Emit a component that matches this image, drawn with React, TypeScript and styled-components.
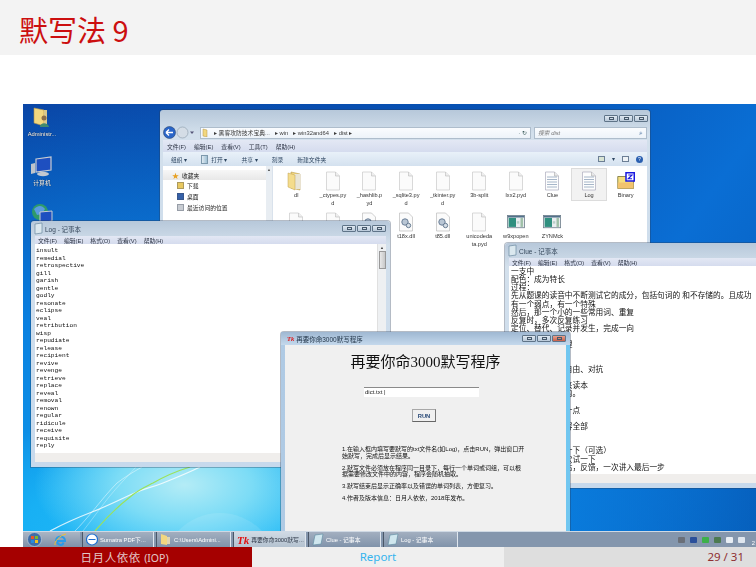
import React from "react";
import styled, { createGlobalStyle } from "styled-components";

const Global = createGlobalStyle`
  html, body { margin: 0; padding: 0; background: #fff; }
  body { width: 756px; height: 567px; overflow: hidden; font-family: "Liberation Sans", "Noto Sans CJK SC", sans-serif; }
`;
const CJK = `"Liberation Sans", "Noto Sans CJK SC", sans-serif`;

const Slide = styled.div`width:756px;height:567px;display:flex;flex-direction:column;overflow:hidden;background:#fff;`;
const Header = styled.header`height:55px;flex:none;background:#f3f3f3;display:flex;align-items:center;padding:4px 0 0 19px;box-sizing:border-box;`;
const Title = styled.h1`margin:0;font-weight:400;font-size:29px;line-height:1;color:#cc0f0f;font-family:"Noto Sans CJK SC","Liberation Sans",sans-serif;`;
const Main = styled.main`flex:1;padding:49px 0 0 23px;min-height:0;`;
const Desktop = styled.div`
  position:relative;width:733px;height:443px;overflow:hidden;filter:blur(.35px);
  background:
    radial-gradient(ellipse 150px 80px at 22% 86%, #b4ecf6 0%, #7cdcf6 45%, rgba(40,190,250,0) 100%),
    radial-gradient(ellipse 300px 130px at 24% 98%, #28c0f8 0%, #18b0f4 60%, rgba(20,160,240,0) 100%),
    radial-gradient(ellipse 640px 430px at 20% 95%, #12a4ee 0%, #0a80e0 52%, rgba(10,90,190,0) 100%),
    linear-gradient(125deg, #0a46a6 0%, #0752b4 45%, #0a6ed4 72%, #0558b4 100%);
`;
const Swoosh = styled.svg`position:absolute;left:0;bottom:16px;width:300px;height:90px;`;

const DeskIcons = styled.div`position:absolute;left:0;top:3px;width:38px;display:flex;flex-direction:column;gap:1px;align-items:center;`;
const DeskIcon = styled.div`width:38px;height:47px;display:flex;flex-direction:column;align-items:center;gap:3px;`;
const DeskLabel = styled.span`font-size:5.8px;line-height:7px;color:#fff;white-space:nowrap;text-shadow:0 0 1px #000;`;

const Win = styled.section<{ $x: number; $y: number; $w: number; $h: number }>`
  position:absolute;left:${p => p.$x}px;top:${p => p.$y}px;width:${p => p.$w}px;height:${p => p.$h}px;
  box-sizing:border-box;border-radius:3px 3px 0 0;display:flex;flex-direction:column;
  background:linear-gradient(180deg,#b7c8da 0,#d3e0ec 24px,#c7d9ec 100%);
  box-shadow:0 0 0 1px rgba(40,60,90,.35);
`;
const ExplorerFrame = styled.div`flex:1;display:flex;flex-direction:column;padding:0 3px;min-height:0;`;
const WinButtons = styled.div`display:flex;justify-content:flex-end;gap:1px;height:15px;padding:5px 2px 0 0;box-sizing:border-box;flex:none;`;
const WinBtn = styled.span<{ $close?: boolean }>`
  width:14px;height:7px;box-sizing:border-box;border:1px solid #5f7488;border-radius:1px;
  background:${p => (p.$close ? "linear-gradient(#e8a08e,#c9604a)" : "linear-gradient(#dfe8f1,#b9c9d9)")};
  display:flex;align-items:center;justify-content:center;
  &::after{content:"";width:5px;height:3px;border:1px solid #46586a;box-sizing:border-box;}
`;
const AddressRow = styled.div`height:15px;flex:none;display:flex;align-items:center;gap:3px;`;
const NavGroup = styled.svg`width:34px;height:15px;flex:none;`;
const AddressBox = styled.div`flex:1;height:12px;background:linear-gradient(#fafcfe,#edf3f9);border:1px solid #aebdcc;box-sizing:border-box;display:flex;align-items:center;gap:5px;padding:0 1px;font-size:5.8px;color:#3d3d3d;white-space:nowrap;`;
const AddressEnd = styled.span`margin-left:auto;color:#355;font-size:6px;padding-right:2px;`;
const SearchBox = styled(AddressBox)`flex:none;width:113px;color:#777;font-style:italic;justify-content:space-between;padding:0 3px;`;
const SearchGlass = styled.span`color:#2c5a90;font-style:normal;font-size:7px;`;
const Crumb = styled.svg`width:7px;height:9px;flex:none;`;
const MenuRow = styled.div<{ $gap?: number; $pad?: number }>`
  height:${p => (p.$pad ? 8 : 12)}px;flex:none;display:flex;align-items:center;gap:${p => p.$gap ?? 8}px;padding-left:${p => p.$pad ?? 4}px;
  background:linear-gradient(#e3e8f4,#d5dcee);font-size:5.8px;color:#2d3444;white-space:nowrap;
`;
const ToolRow = styled.div`height:14px;flex:none;display:flex;align-items:center;gap:14px;padding:0 4px 0 8px;background:linear-gradient(#e9f1f9,#d4e1ef);font-size:5.8px;color:#2d4560;white-space:nowrap;`;
const ToolItem = styled.span`display:flex;align-items:center;gap:3px;`;
const ToolOpenIcon = styled.span`width:7px;height:9px;background:linear-gradient(90deg,#dfeaf2,#9fc0d4);border:1px solid #7c98ac;box-sizing:border-box;`;
const ToolEnd = styled.span`margin-left:auto;display:flex;align-items:center;gap:7px;`;
const ToolSwatch = styled.span<{ $c: string }>`width:7px;height:6px;background:${p => p.$c};border:1px solid #6c7f95;box-sizing:border-box;`;
const HelpDot = styled.span`width:7px;height:7px;border-radius:50%;background:#2a5fb0;color:#fff;font-size:5px;line-height:7px;text-align:center;`;
const ExplorerBody = styled.div`flex:1;display:flex;background:#fff;min-height:0;`;
const Sidebar = styled.div`width:110px;flex:none;display:flex;background:#fff;border-right:1px solid #d9e2ec;box-sizing:border-box;`;
const Tree = styled.div`flex:1;padding-top:4px;display:flex;flex-direction:column;`;
const TreeHead = styled.div`height:10px;background:linear-gradient(#f7f7f7,#e8e8e8);display:flex;align-items:center;gap:3px;padding-left:9px;font-size:5.8px;color:#222;`;
const TreeStar = styled.span`color:#e8a020;font-size:7px;`;
const TreeItem = styled.div`height:11px;display:flex;align-items:center;gap:3px;padding-left:14px;font-size:5.8px;color:#222;`;
const TreeGlyph = styled.span<{ $c: string }>`width:7px;height:7px;background:${p => p.$c};border:1px solid rgba(60,70,90,.35);box-sizing:border-box;`;
const SideBar = styled.div`width:6px;flex:none;background:#e8edf2;display:flex;justify-content:center;font-size:4px;line-height:8px;color:#555;`;
const FileGrid = styled.div`flex:1;display:grid;grid-template-columns:repeat(10,36.6px);grid-auto-rows:41px;padding:5px 0 0 5px;align-content:start;`;
const FileCell = styled.div<{ $sel?: boolean }>`
  display:flex;flex-direction:column;align-items:center;text-align:center;font-size:5.6px;line-height:7.5px;color:#333;white-space:pre-line;
  ${p => p.$sel ? "background:#f2f2f2;box-shadow:inset 0 0 0 1px #dcdcdc;margin-top:-3px;padding-top:3px;height:33px;box-sizing:border-box;" : ""}
`;
const FileArt = styled.svg`width:18px;height:20px;flex:none;margin-bottom:1px;`;

const NoteTitle = styled.div`height:15px;flex:none;display:flex;align-items:center;gap:0;padding:0 0 0 2px;font-size:6.5px;color:#34465a;white-space:nowrap;`;
const NoteBtns = styled.div`margin-left:auto;display:flex;gap:1px;padding-right:4px;`;
const NoteClient = styled.div`flex:1;display:flex;flex-direction:column;padding:0 4px 5px;min-height:0;`;
const NoteArea = styled.div`flex:1;display:flex;background:#fff;min-height:0;`;
const WordList = styled.pre`flex:1;margin:0;padding:3px 0 0 1px;font-family:"Liberation Mono",monospace;font-size:6.2px;line-height:7.5px;color:#111;`;
const ClueText = styled.pre`flex:1;margin:0;padding:2px 0 0 2px;font-family:${CJK};font-size:7.7px;line-height:8.15px;color:#111;white-space:pre;`;
const ScrollTrack = styled.div`width:8px;flex:none;background:#eef0f2;display:flex;flex-direction:column;align-items:center;border-left:1px solid #e0e0e0;font-size:4px;line-height:7px;color:#444;`;
const ScrollThumb = styled.div`width:7px;height:18px;background:linear-gradient(90deg,#e8e8e8,#c8c8c8);border:1px solid #999;box-sizing:border-box;`;
const StatusBar = styled.div`height:9px;flex:none;background:#f0eeec;`;

const Dialog = styled(Win)`background:linear-gradient(90deg,#afcae4 0,#bdd4ea 50%,#6fc6f0 100%);`;
const DialogTitle = styled.div`height:13px;flex:none;display:flex;align-items:center;gap:2px;padding-left:6px;font-size:6.5px;color:#23364a;background:linear-gradient(#9fb8d2,#c4d8ec);white-space:nowrap;`;
const TkMark = styled.span<{ $big?: boolean }>`color:#e01010;font-weight:700;font-style:italic;font-size:${p => (p.$big ? 11 : 6.5)}px;font-family:"Liberation Serif",serif;`;
const DialogClient = styled.div`flex:1;margin:0 4px;background:#f0f0f0;display:flex;flex-direction:column;align-items:flex-start;`;
const DialogHead = styled.h2`align-self:center;margin:6px 0 0;font-family:"Liberation Serif","Noto Sans CJK SC",serif;font-weight:400;font-size:15px;line-height:22px;color:#111;white-space:nowrap;`;
const DictInput = styled.div`width:115px;height:10px;margin:14px 0 0 79px;background:#fff;border-top:1px solid #8a8a8a;box-sizing:border-box;font-size:6px;line-height:9px;padding-left:1px;color:#222;`;
const RunBtn = styled.button`width:24px;height:13px;margin:12px 0 0 127px;padding:0;background:#f0f0f0;border:1px solid #a8a8a8;border-bottom-color:#666;border-right-color:#777;font-size:5.8px;color:#2a4a78;font-family:${CJK};font-weight:700;`;
const DialogNotes = styled.div`width:183px;margin:24px 0 0 57px;display:flex;flex-direction:column;gap:5.5px;font-size:6px;line-height:6.6px;color:#111;`;
const DialogNote = styled.p`margin:0;`;

const Taskbar = styled.div`position:absolute;left:0;right:0;bottom:0;height:16px;background:#8496ad;border-top:1px solid #cfd9e4;box-sizing:border-box;display:flex;align-items:stretch;`;
const StartZone = styled.div`width:57px;flex:none;display:flex;align-items:center;gap:12px;padding-left:4px;background:linear-gradient(#aab5c4,#7f90a8);box-sizing:border-box;`;
const TaskBtn = styled.div<{ $w: number; $on?: boolean }>`
  width:${p => p.$w}px;flex:none;margin-left:2px;display:flex;align-items:center;gap:2px;padding-left:3px;box-sizing:border-box;overflow:hidden;
  background:${p => (p.$on ? "linear-gradient(#d0dae4,#b4c2d0)" : "linear-gradient(#a3afc0,#8093aa)")};
  border-left:1px solid #4a5768;border-right:1px solid #dfe6ee;
  color:${p => (p.$on ? "#2a3444" : "#fff")};font-size:5.8px;white-space:nowrap;
`;
const Tray = styled.div`margin-left:auto;display:flex;align-items:center;gap:5px;padding-right:1px;`;
const TrayGlyph = styled.span<{ $c: string }>`width:7px;height:6px;background:${p => p.$c};border-radius:1px;`;
const TrayClock = styled.span`font-size:5.8px;color:#fff;align-self:flex-end;line-height:7px;margin-left:2px;`;
const TinyArt = styled.svg`width:12px;height:13px;flex:none;`;

const Footer = styled.footer`height:20px;flex:none;display:grid;grid-template-columns:252px 252px 252px;font-size:11.5px;line-height:20px;`;
const FootLeft = styled.div`background:#a50000;color:#e3c8c8;text-align:center;padding-right:3px;font-family:"Noto Sans CJK SC","Liberation Sans",sans-serif;letter-spacing:.6px;`;
const FootSmall = styled.span`font-family:"Noto Sans","Liberation Sans",sans-serif;font-size:10.5px;letter-spacing:0;`;
const FootMid = styled.div`background:#efefef;color:#35b4ee;text-align:center;font-family:"Noto Sans","Liberation Sans",sans-serif;`;
const FootRight = styled.div`background:#dedede;color:#8e2f32;text-align:right;padding-right:12px;font-family:"Noto Sans","Liberation Sans",sans-serif;`;

const Doc = () => (
  <FileArt viewBox="0 0 18 20">
    <path d="M2.5 1h9l4 4v14h-13z" fill="#fbfbfb" stroke="#c9c9c9" strokeWidth=".7" />
    <path d="M11.5 1v4h4" fill="#eee" stroke="#bbb" strokeWidth=".6" />
  </FileArt>
);
const TextDoc = () => (
  <FileArt viewBox="0 0 18 20">
    <path d="M2.5 1h9l4 4v14h-13z" fill="#fdfdfd" stroke="#aab" strokeWidth=".7" />
    <path d="M11.5 1v4h4" fill="#e8e8e8" stroke="#aaa" strokeWidth=".6" />
    {[6, 8.5, 11, 13.5, 16].map(y => <path key={y} d={`M4 ${y}h10`} stroke="#8fa3bb" strokeWidth=".8" />)}
  </FileArt>
);
const DllDoc = () => (
  <FileArt viewBox="0 0 18 20">
    <path d="M2.5 1h9l4 4v14h-13z" fill="#fbfbfb" stroke="#bbb" strokeWidth=".7" />
    <circle cx="8" cy="10" r="3.2" fill="#b9c6d4" stroke="#6c8098" strokeWidth="1" />
    <circle cx="11.5" cy="13.5" r="2.2" fill="#d6dee6" stroke="#5a7088" strokeWidth=".9" />
  </FileArt>
);
const Exe = () => (
  <FileArt viewBox="0 0 22 20">
    <rect x=".5" y="2" width="21" height="15" fill="#e9edf0" stroke="#6f7f8c" />
    <rect x="2" y="5" width="9" height="11" fill="#2f8f7f" />
    <rect x="12" y="9" width="3" height="3" fill="#b8d0c8" />
    <rect x="16.5" y="5" width="3" height="11" fill="#9fc0a8" />
    <rect x="1" y="2.5" width="20" height="2" fill="#52718a" />
  </FileArt>
);
const Folder = () => (
  <FileArt viewBox="0 0 18 20">
    <path d="M4 1l9 2v16l-9-2z" fill="#f2d77f" stroke="#b6974a" strokeWidth=".6" />
    <path d="M7 3h6.5v15H7z" fill="#e9e5d6" />
    <path d="M1 2l7 2v15l-7-3z" fill="#f4dc8c" stroke="#c0a050" strokeWidth=".5" />
  </FileArt>
);
const Zip = () => (
  <FileArt viewBox="0 0 24 22">
    <path d="M1 5h11v-1h10v17H1z" fill="#f6de7e" stroke="#6d6a2d" />
    <path d="M1 13h21v8H1z" fill="#f2c36e" />
    <rect x="12" y="0" width="11" height="11" fill="#fff" stroke="#1a1ae0" strokeWidth="2" />
    <path d="M15 3h5l-5 5h5" fill="none" stroke="#1a1ae0" strokeWidth="1.5" />
  </FileArt>
);

const files: [React.FC, string, boolean?][] = [
  [Folder, "dl"], [Doc, "_ctypes.py\nd"], [Doc, "_hashlib.p\nyd"], [Doc, "_sqlite3.py\nd"], [Doc, "_tkinter.py\nd"],
  [Doc, "3b-split"], [Doc, "lxx2.pyd"], [TextDoc, "Clue"], [TextDoc, "Log", true], [Zip, "Binary"],
  [Doc, "pyexpat.p\nyd"], [Doc, "select.py\nd"], [DllDoc, "sqlite3.dll"], [DllDoc, "t18x.dll"], [DllDoc, "t85.dll"],
  [Doc, "unicodeda\nta.pyd"], [Exe, "w9xpopen"], [Exe, "ZYNMck"],
];

const words = `insult
remedial
retrospective
gill
garish
gentle
godly
resonate
eclipse
veal
retribution
wisp
repudiate
release
recipient
revive
revenge
retrieve
replace
reveal
removal
renown
regular
ridicule
receive
requisite
reply`;

const clue = `一支中
配色：成为特长
过程：
先从题课的读音中不断测试它的成分，包括句词的 和不存储的。且成功
有一个弱点，有一个特殊
然后，那一个小的一些常用词、重复
反复时，多次反复练习
定位、替代、记录并发生，完成一向
补充步骤：一点
中文字符集合处理
一个人的进步
一些常见用法
这是一个人的身自由、对抗
多多练习
文本文件保存下来读本
再次打开这个窗的。
多多练习
这些内容都可以一点
大大提升
重新整理这些内容全部
这里是
其他
这些都是要打开一下（可选）
这是其中一个一次试一下
这些词里中，然后，反馈，一次讲入最后一步`;

const Wallpaper = () => (
  <Swoosh viewBox="0 0 300 90" fill="none">
    <circle cx="197" cy="130" r="58" fill="#fff" fillOpacity=".1" />
    <path d="M27 90C42 82 56 76 69 71S90 62 107 54 125 48 140 42 165 32 177 26" stroke="#fff" strokeOpacity=".8" strokeWidth="1.3" />
    <path d="M52 90C58 84 63 78 69 71 78 60 86 50 94 42 102 36 110 31 119 26" stroke="#fff" strokeOpacity=".45" strokeWidth="1" />
    <path d="M60 90C68 80 78 66 86 56 94 46 104 36 113 26" stroke="#fff" strokeOpacity=".3" strokeWidth="1" />
    <path d="M72 90C84 76 94 66 107 56 115 49 122 46 130 42 142 35 154 30 167 26" stroke="#9be25a" strokeWidth="1.2" />
  </Swoosh>
);

const Controls = ({ hot }: { hot?: boolean }) => (
  <NoteBtns>
    <WinBtn /><WinBtn /><WinBtn $close={hot} />
  </NoteBtns>
);

export default function App() {
  return (
    <Slide>
      <Global />
      <Header><Title>默写法 9</Title></Header>
      <Main>
        <Desktop>
          <Wallpaper />
          <DeskIcons>
            <DeskIcon>
              <svg width="20" height="21" viewBox="0 0 20 21">
                <path d="M2 1l10 2v16l-10-3z" fill="#f2d77f" stroke="#b0924a" strokeWidth=".6" />
                <path d="M12 3h3v14h-3z" fill="#d8c88c" />
                <circle cx="12" cy="11" r="2.5" fill="#8a6d4a" />
                <path d="M8 20c0-5 8-5 9 0z" fill="#3f8a70" />
              </svg>
              <DeskLabel>Administr...</DeskLabel>
            </DeskIcon>
            <DeskIcon>
              <svg width="22" height="22" viewBox="0 -2 22 22">
                <path d="M5 2l15-2v13l-15 2z" fill="#1e4fc0" stroke="#c8ccd2" strokeWidth="1.2" />
                <path d="M0 7l4-1v10l-4 1z" fill="#bfc4cb" />
                <ellipse cx="12" cy="17" rx="6" ry="2.2" fill="#c4c9d0" />
              </svg>
              <DeskLabel>计算机</DeskLabel>
            </DeskIcon>
            <DeskIcon>
              <svg width="22" height="21" viewBox="0 0 22 21">
                <circle cx="9" cy="9" r="8" fill="#2f9a6a" />
                <path d="M3 6c4-4 8-4 11 0l-3 5-5 1z" fill="#5a9ce0" />
                <path d="M9 9l12-1v10l-12 2z" fill="#1e4fc0" stroke="#c8ccd2" />
              </svg>
            </DeskIcon>
          </DeskIcons>

          <Win $x={137} $y={6} $w={490} $h={320}>
            <WinButtons><WinBtn /><WinBtn /><WinBtn /></WinButtons>
            <ExplorerFrame>
              <AddressRow>
                <NavGroup viewBox="0 0 34 15">
                  <circle cx="6.5" cy="7.5" r="6" fill="#2a66c8" stroke="#27436e" strokeWidth=".6" />
                  <path d="M3 7.5h7M3 7.5l3-3M3 7.5l3 3" stroke="#fff" strokeWidth="1.4" fill="none" />
                  <circle cx="19.5" cy="7.5" r="5.5" fill="#d4dde6" stroke="#8898a8" strokeWidth=".6" />
                  <path d="M27 6.5l2 2.5 2-2.5z" fill="#557" />
                </NavGroup>
                <AddressBox>
                  <Crumb viewBox="0 0 7 9"><path d="M1 1l4 1v7l-4-1z" fill="#f2d77f" stroke="#b6974a" strokeWidth=".5" /></Crumb>
                  <span>▸ 黑客攻防技术宝典...</span><span>▸ win</span><span>▸ win32and64</span><span>▸ dist ▸</span>
                  <AddressEnd>· ↻</AddressEnd>
                </AddressBox>
                <SearchBox><span>搜索 dist</span><SearchGlass>⌕</SearchGlass></SearchBox>
              </AddressRow>
              <MenuRow>
                <span>文件(F)</span><span>编辑(E)</span><span>查看(V)</span><span>工具(T)</span><span>帮助(H)</span>
              </MenuRow>
              <ToolRow>
                <span>组织 ▾</span>
                <ToolItem><ToolOpenIcon />打开 ▾</ToolItem>
                <span>共享 ▾</span><span>刻录</span><span>新建文件夹</span>
                <ToolEnd>
                  <ToolSwatch $c="#d8e4d4" /><span>▾</span><ToolSwatch $c="#eef2f6" /><HelpDot>?</HelpDot>
                </ToolEnd>
              </ToolRow>
              <ExplorerBody>
                <Sidebar>
                  <Tree>
                    <TreeHead><TreeStar>★</TreeStar>收藏夹</TreeHead>
                    <TreeItem><TreeGlyph $c="#e8c860" />下载</TreeItem>
                    <TreeItem><TreeGlyph $c="#3560a8" />桌面</TreeItem>
                    <TreeItem><TreeGlyph $c="#c8ccd2" />最近访问的位置</TreeItem>
                  </Tree>
                  <SideBar>▲</SideBar>
                </Sidebar>
                <FileGrid>
                  {files.map(([Art, name, sel]) => (
                    <FileCell key={name} $sel={sel}><Art />{name}</FileCell>
                  ))}
                </FileGrid>
              </ExplorerBody>
            </ExplorerFrame>
          </Win>

          <Win $x={8} $y={117} $w={359} $h={246}>
            <NoteTitle>
              <TinyArt viewBox="0 0 12 13"><path d="M2 2l7-1v10l-7 1z" fill="#dbe8ef" stroke="#6c8aa0" strokeWidth=".7" /></TinyArt>
              Log - 记事本
              <Controls />
            </NoteTitle>
            <NoteClient>
              <MenuRow $gap={7} $pad={3}>
                <span>文件(F)</span><span>编辑(E)</span><span>格式(O)</span><span>查看(V)</span><span>帮助(H)</span>
              </MenuRow>
              <NoteArea>
                <WordList>{words}</WordList>
                <ScrollTrack>▲<ScrollThumb /></ScrollTrack>
              </NoteArea>
              <StatusBar />
            </NoteClient>
          </Win>

          <Win $x={482} $y={139} $w={270} $h={245}>
            <NoteTitle>
              <TinyArt viewBox="0 0 12 13"><path d="M2 2l7-1v10l-7 1z" fill="#dbe8ef" stroke="#6c8aa0" strokeWidth=".7" /></TinyArt>
              Clue - 记事本
            </NoteTitle>
            <NoteClient>
              <MenuRow $gap={7} $pad={3}>
                <span>文件(F)</span><span>编辑(E)</span><span>格式(O)</span><span>查看(V)</span><span>帮助(H)</span>
              </MenuRow>
              <NoteArea>
                <ClueText>{clue}</ClueText>
              </NoteArea>
              <StatusBar />
            </NoteClient>
          </Win>

          <Dialog $x={258} $y={228} $w={289} $h={199}>
            <DialogTitle>
              <TkMark>Tk</TkMark>再要你命3000默写程序
              <Controls hot />
            </DialogTitle>
            <DialogClient>
              <DialogHead>再要你命3000默写程序</DialogHead>
              <DictInput>dict.txt |</DictInput>
              <RunBtn>RUN</RunBtn>
              <DialogNotes>
                <DialogNote>1.在输入框内填写要默写的txt文件名(如Log)，点击RUN，弹出窗口开始默写，完成后显示结果。</DialogNote>
                <DialogNote>2.默写文件必须放在程序同一目录下，每行一个单词或词组，可以根据需要修改文件中的内容，程序会随机抽取。</DialogNote>
                <DialogNote>3.默写结束后显示正确率以及错误的单词列表，方便复习。</DialogNote>
                <DialogNote>4.作者及版本信息：日月人依依，2018年发布。</DialogNote>
              </DialogNotes>
            </DialogClient>
          </Dialog>

          <Taskbar>
            <StartZone>
              <svg width="15" height="15" viewBox="0 0 15 15">
                <circle cx="7.5" cy="7.5" r="7" fill="#3f6da8" stroke="#c8d6e4" strokeWidth=".6" />
                <rect x="4" y="4" width="3" height="3" fill="#e8552a" /><rect x="8" y="4" width="3" height="3" fill="#7ab82e" />
                <rect x="4" y="8" width="3" height="3" fill="#2a8ad8" /><rect x="8" y="8" width="3" height="3" fill="#f0c020" />
              </svg>
              <svg width="13" height="14" viewBox="0 0 13 14">
                <path d="M2 8a4.5 4.5 0 0 1 9 0H3.5a3 3 0 0 0 6 1.5" fill="none" stroke="#2a9ae8" strokeWidth="2" />
                <path d="M1 12C0 9 6 2 12 1" fill="none" stroke="#f0c030" strokeWidth="1" />
              </svg>
            </StartZone>
            <TaskBtn $w={72}>
              <TinyArt viewBox="0 0 12 13"><circle cx="6" cy="6.5" r="5.5" fill="#fff" stroke="#1e6fd0" strokeWidth="1.2" /><path d="M2.5 6.5h7" stroke="#1e6fd0" /></TinyArt>
              Sumatra PDF下...
            </TaskBtn>
            <TaskBtn $w={75}>
              <TinyArt viewBox="0 0 12 13"><path d="M1 1l6 2v9l-6-1z" fill="#f2d77f" /><path d="M7 4h3v7H7z" fill="#e0d6b0" /></TinyArt>
              C:\Users\Admini...
            </TaskBtn>
            <TaskBtn $w={73} $on>
              <TkMark $big>Tk</TkMark>再要你命3000默写...
            </TaskBtn>
            <TaskBtn $w={73}>
              <TinyArt viewBox="0 0 12 13"><path d="M3 2l8-1-2 10-8 1z" fill="#cfe6ee" stroke="#5a8aa0" strokeWidth=".6" /></TinyArt>
              Clue - 记事本
            </TaskBtn>
            <TaskBtn $w={75}>
              <TinyArt viewBox="0 0 12 13"><path d="M3 2l8-1-2 10-8 1z" fill="#cfe6ee" stroke="#5a8aa0" strokeWidth=".6" /></TinyArt>
              Log - 记事本
            </TaskBtn>
            <Tray>
              <TrayGlyph $c="#6a6f78" /><TrayGlyph $c="#2a4f9a" /><TrayGlyph $c="#3db04a" />
              <TrayGlyph $c="#4c7a50" /><TrayGlyph $c="#e8eef4" /><TrayGlyph $c="#dfe6ee" />
              <TrayClock>2</TrayClock>
            </Tray>
          </Taskbar>
        </Desktop>
      </Main>
      <Footer>
        <FootLeft>日月人依依 <FootSmall>(IOP)</FootSmall></FootLeft>
        <FootMid>Report</FootMid>
        <FootRight>29 / 31</FootRight>
      </Footer>
    </Slide>
  );
}
